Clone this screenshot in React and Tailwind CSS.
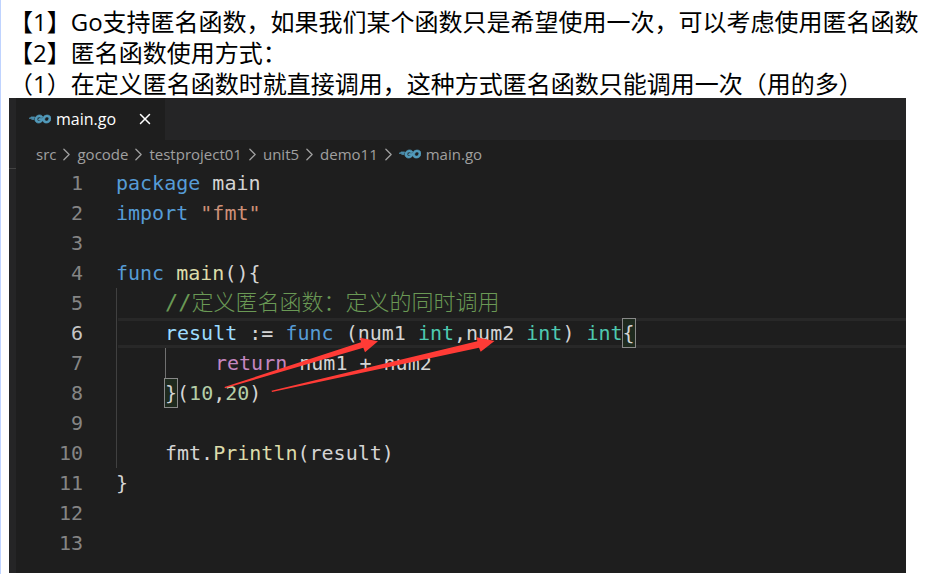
import { Fragment } from 'react'
import { ChevronRight, X } from 'lucide-react'
import { SiGo } from 'react-icons/si'

const NOTES = [
  '【1】Go支持匿名函数，如果我们某个函数只是希望使用一次，可以考虑使用匿名函数',
  '【2】匿名函数使用方式：',
  '（1）在定义匿名函数时就直接调用，这种方式匿名函数只能调用一次（用的多）',
]

const PATH = ['src', 'gocode', 'testproject01', 'unit5', 'demo11']

const COLORS = {
  keyword: 'text-[#569cd6]',
  control: 'text-[#c586c0]',
  string: 'text-[#ce9178]',
  func: 'text-[#dcdcaa]',
  comment: "font-['DejaVu_Sans_Mono','Noto_Sans_CJK_SC',monospace] text-[22px] font-light text-[#6a9955]",
  variable: 'text-[#9cdcfe]',
  type: 'text-[#4ec9b0]',
  number: 'text-[#b5cea8]',
  bracket: 'border border-[#888888] bg-[#1e2a1e] -mx-px leading-[28px]',
}

// indent: number of levels, tokens: [text, kind]
const LINES = [
  { indent: 0, tokens: [['package', 'keyword'], [' main']] },
  { indent: 0, tokens: [['import', 'keyword'], [' '], ['"fmt"', 'string']] },
  { indent: 0, tokens: [] },
  { indent: 0, tokens: [['func', 'keyword'], [' '], ['main', 'func'], ['(){']] },
  { indent: 1, tokens: [['//定义匿名函数：定义的同时调用', 'comment']] },
  {
    indent: 1,
    active: true,
    tokens: [
      ['result', 'variable'],
      [' := '],
      ['func', 'keyword'],
      [' (num1 '],
      ['int', 'type'],
      [',num2 '],
      ['int', 'type'],
      [') '],
      ['int', 'type'],
      ['{', 'bracket'],
    ],
  },
  { indent: 2, tokens: [['return', 'control'], [' num1 + num2']] },
  {
    indent: 1,
    tokens: [['}', 'bracket'], ['('], ['10', 'number'], [','], ['20', 'number'], [')']],
  },
  { indent: 1, tokens: [] },
  { indent: 1, tokens: [['fmt.'], ['Println', 'func'], ['(result)']] },
  { indent: 0, tokens: [['}']] },
  { indent: 0, tokens: [] },
  { indent: 0, tokens: [] },
]

function GoIcon() {
  return <SiGo size={22} className="shrink-0 stroke-[#519aba] stroke-[0.7] text-[#519aba]" />
}

function CodeLine({ line, number }) {
  return (
    <li className="flex h-[30px]">
      <span
        className={`w-[67px] shrink-0 text-right ${line.active ? 'text-[#c6c6c6]' : 'text-[#858585]'}`}
      >
        {number}
      </span>
      <div className="ml-[33px] flex min-w-0 flex-1">
        {line.indent > 0 && (
          <span className="w-[2px] shrink-0 border-l border-[#404040]" />
        )}
        <code
          className={`flex min-w-0 flex-1 whitespace-pre font-[inherit] ${
            line.indent > 0 ? 'pl-[47px]' : ''
          } ${line.active ? 'shadow-[inset_0_3px_#282828,inset_0_-3px_#282828]' : ''}`}
        >
          {line.indent > 1 && (
            <span className="w-[50px] shrink-0 border-l border-[#707070]" />
          )}
          {line.tokens.map(([text, kind], i) => (
            <span key={i} className={kind ? COLORS[kind] : ''}>
              {text}
            </span>
          ))}
        </code>
      </div>
    </li>
  )
}

export default function App() {
  return (
    <div className="min-h-screen border-l border-[#bfd3ff] bg-white pr-9 pl-2">
      <section className="h-[98px] pt-[6px] font-['Open_Sans','Noto_Sans_CJK_SC',sans-serif] text-[24px] leading-[31px] whitespace-nowrap text-black">
        {NOTES.map((note) => (
          <p key={note}>{note}</p>
        ))}
      </section>

      <main className="flex bg-[#1e1e1e] text-[#d4d4d4]">
        <div className="flex w-[7px] shrink-0 flex-col bg-[#252526]">
          <span className="h-[71px] border-b border-[#434343]" />
        </div>

        <div className="min-w-0 flex-1 pb-[15px]">
          {/* Tabs */}
          <div className="flex h-[42px] bg-[#252526] font-['Open_Sans',sans-serif] text-[16px] text-white">
            <div className="flex w-[149px] items-center bg-[#1e1e1e] pl-[13px]">
              <GoIcon />
              <span className="ml-[5px]">main.go</span>
              <button type="button" aria-label="Close" className="ml-auto mr-[11px]">
                <X size={18} strokeWidth={2} />
              </button>
            </div>
          </div>

          {/* Breadcrumbs */}
          <nav className="flex h-[28px] items-center pl-5 font-['Open_Sans',sans-serif] text-[15px] text-[#a0a0a0]">
            {PATH.map((part) => (
              <Fragment key={part}>
                <a href="#">{part}</a>
                <ChevronRight size={21} strokeWidth={1.5} />
              </Fragment>
            ))}
            <GoIcon />
            <a href="#" className="ml-[5px]">
              main.go
            </a>
          </nav>

          {/* Code */}
          <div className="relative">
            <ol className="font-['DejaVu_Sans_Mono',monospace] text-[20px] leading-[30px]">
              {LINES.map((line, i) => (
                <CodeLine key={i} line={line} number={i + 1} />
              ))}
            </ol>
            {/* Arrows from the arguments to the parameters */}
            <svg
              className="pointer-events-none absolute top-0 left-0"
              width="500"
              height="240"
              fill="#ff3b36"
              aria-hidden="true"
            >
              <path d="M208.5 219 L345 174.3 L344 169.7 L362 173.3 L349 184.3 L347.3 179.7 L209 220.3 Z" />
              <path d="M255.5 222.8 L461.3 173.3 L460.7 169.3 L478.5 173 L464.7 183.7 L463 179.7 L256 224 Z" />
            </svg>
          </div>
        </div>
      </main>
    </div>
  )
}
